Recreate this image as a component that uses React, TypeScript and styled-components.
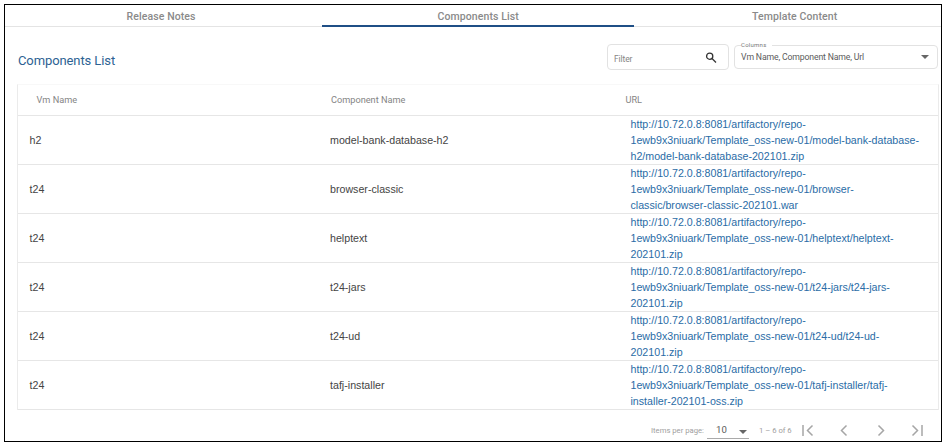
import React from 'react';
import styled, { createGlobalStyle } from 'styled-components';

const GlobalStyle = createGlobalStyle`
  * { box-sizing: border-box; }
  body { margin: 0; background: #fff; font-family: Roboto, sans-serif; }
`;

const Frame = styled.main`
  width: 938px;
  height: 438px;
  margin: 4px;
  border: 1px solid #000;
  background: #fff;
`;

const Tabs = styled.nav`
  display: grid;
  grid-template-columns: 316.5px 312.5px 1fr;
  height: 22px;
  border-bottom: 1px solid #e4e4e4;
`;

const Tab = styled.div<{ $active?: boolean; $shift: number }>`
  height: 22px;
  padding-left: ${p => p.$shift}px;
  border-bottom: 2px solid ${p => (p.$active ? '#1f4f86' : 'transparent')};
  color: #8a8a8a;
  font-size: 10.5px;
  font-weight: 500;
  line-height: 24px;
  letter-spacing: 0.1px;
  white-space: nowrap;
`;

const Toolbar = styled.header`
  display: flex;
  align-items: flex-start;
  height: 57px;
  padding: 17px 3px 0 13px;
`;

const Title = styled.h1`
  flex: 1;
  margin: 8px 0 0;
  color: #2d6293;
  font-size: 13px;
  font-weight: 400;
  line-height: 17px;
  letter-spacing: -0.1px;
`;

const FilterBox = styled.div`
  display: flex;
  align-items: center;
  justify-content: space-between;
  width: 122px;
  height: 26px;
  margin-right: 5px;
  padding: 0 11px 0 6px;
  border: 1px solid #e2e2e2;
  border-radius: 4px;
  color: #858585;
  font-size: 8.5px;
  letter-spacing: -0.1px;
`;

const FilterText = styled.span`
  padding-top: 4px;
`;

const Select = styled.fieldset`
  display: flex;
  align-items: center;
  justify-content: space-between;
  width: 204px;
  height: 28px;
  min-width: 0;
  margin: -3px 0 0;
  padding: 0 8px 4px 6px;
  border: 1px solid #e2e2e2;
  border-radius: 4px;
  color: #5c5c5c;
  font-size: 8.7px;
  letter-spacing: -0.15px;
`;

const Legend = styled.legend`
  height: 8px;
  margin: 0;
  padding: 0 5px 0 0;
  color: #777;
  font-size: 6px;
  line-height: 8px;
  letter-spacing: 0.25px;
`;

const Table = styled.section`
  width: 922px;
  margin-left: 12px;
  border: 1px solid #ebebeb;
  border-top-color: #f8f8f8;
  border-bottom: 0;
`;

const Row = styled.div`
  display: grid;
  grid-template-columns: 300.5px 300.5px 1fr;
  align-items: center;
  height: 49px;
  padding-left: 11.5px;
  border-bottom: 1px solid #e6e6e6;
  color: #444;
  font: 10.67px/16px 'Liberation Sans', Arial, sans-serif;
`;

const HeadRow = styled(Row)`
  grid-template-columns: 294.5px 294.5px 1fr;
  height: 31px;
  padding-left: 18.5px;
  color: #858585;
  font: 9.2px/16px Roboto, sans-serif;
`;

const Url = styled.a`
  color: #2a6ca6;
  white-space: pre-line;
`;

const Pager = styled.footer`
  display: flex;
  align-items: center;
  height: 31px;
  padding: 9px 0 0 646px;
  color: #a0a0a0;
  font-size: 7.7px;
  white-space: nowrap;
`;

const PagerLabel = styled.span`
  flex: none;
  width: 56px;
`;

const PageSize = styled.div`
  display: flex;
  flex: none;
  align-items: center;
  justify-content: space-between;
  width: 42px;
  height: 17px;
  margin-right: 10px;
  padding: 0 2px 1px 9px;
  border-bottom: 1px solid #aaa;
  color: #5c5c5c;
  font-size: 9.6px;
`;

const Range = styled.span`
  flex: none;
  width: 41.5px;
  font-size: 7.7px;
`;

const Arrows = styled.div`
  display: flex;
  flex: none;
  color: #a6a6a6;
`;

const Caret = styled.svg<{ $drop?: number }>`
  width: 8px;
  height: 4px;
  margin-top: ${p => p.$drop ?? 0}px;
  fill: #666;
`;

const Stroke = styled.svg`
  display: block;
  fill: none;
  stroke: currentColor;
  stroke-width: 1.3;
`;

const rows = [
  ['h2', 'model-bank-database-h2', '1ewb9x3niuark/Template_oss-new-01/model-bank-database-\nh2/model-bank-database-202101.zip'],
  ['t24', 'browser-classic', '1ewb9x3niuark/Template_oss-new-01/browser-\nclassic/browser-classic-202101.war'],
  ['t24', 'helptext', '1ewb9x3niuark/Template_oss-new-01/helptext/helptext-\n202101.zip'],
  ['t24', 't24-jars', '1ewb9x3niuark/Template_oss-new-01/t24-jars/t24-jars-\n202101.zip'],
  ['t24', 't24-ud', '1ewb9x3niuark/Template_oss-new-01/t24-ud/t24-ud-\n202101.zip'],
  ['t24', 'tafj-installer', '1ewb9x3niuark/Template_oss-new-01/tafj-installer/tafj-\ninstaller-202101-oss.zip'],
];

const arrowPaths = [
  'M2 1v11 M11.5 1.5l-5 5l5 5',
  'M11.5 1.5l-5 5l5 5',
  'M7.5 1.5l5 5l-5 5',
  'M5.5 1.5l5 5l-5 5 M15 1v11',
];

const ArrowIcon = styled(Stroke)<{ $gap: number }>`
  flex: none;
  width: 18px;
  height: 13px;
  margin-right: ${p => p.$gap}px;
  stroke-width: 1.5;
`;

export default function App() {
  return (
    <>
      <GlobalStyle />
      <Frame>
        <Tabs>
          <Tab $shift={121.5}>Release Notes</Tab>
          <Tab $shift={116} $active>Components List</Tab>
          <Tab $shift={118}>Template Content</Tab>
        </Tabs>
        <Toolbar>
          <Title>Components List</Title>
          <FilterBox>
            <FilterText>Filter</FilterText>
            <Stroke width="12" height="12" viewBox="0 0 12 12" color="#333">
              <circle cx="4.7" cy="5.2" r="3.1" />
              <path d="M7 7.5l4 4" />
            </Stroke>
          </FilterBox>
          <Select>
            <Legend>Columns</Legend>
            <span>Vm Name, Component Name, Url</span>
            <Caret viewBox="0 0 8 4"><path d="M0 0h8L4 4z" /></Caret>
          </Select>
        </Toolbar>
        <Table>
          <HeadRow>
            <span>Vm Name</span>
            <span>Component Name</span>
            <span>URL</span>
          </HeadRow>
          {rows.map(([vm, name, url]) => (
            <Row key={name}>
              <span>{vm}</span>
              <span>{name}</span>
              <Url>{'http://10.72.0.8:8081/artifactory/repo-\n' + url}</Url>
            </Row>
          ))}
        </Table>
        <Pager>
          <PagerLabel>Items per page:</PagerLabel>
          <PageSize>
            10
            <Caret viewBox="0 0 8 4" $drop={6}><path d="M0 0h8L4 4z" /></Caret>
          </PageSize>
          <Range>1 – 6 of 6</Range>
          <Arrows>
            {arrowPaths.map((d, i) => (
              <ArrowIcon key={d} $gap={i === 3 ? 0 : i === 0 ? 16 : 18} viewBox="0 0 18 13"><path d={d} /></ArrowIcon>
            ))}
          </Arrows>
        </Pager>
      </Frame>
    </>
  );
}
